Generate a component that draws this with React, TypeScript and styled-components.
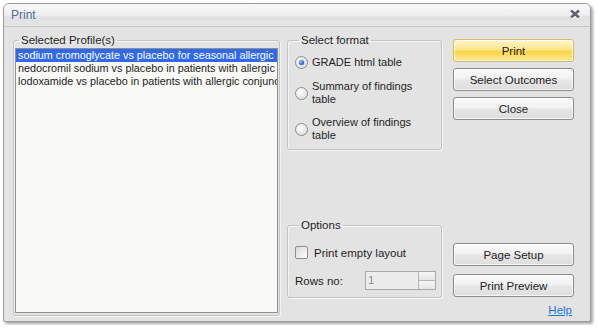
import React, { useState } from 'react';
import styled, { createGlobalStyle, css } from 'styled-components';

const GlobalStyle = createGlobalStyle`
	html, body {
		margin: 0;
		background: #ffffff;
	}
	#root {
		padding: 3px;
	}
`;

const uiFont = `'Liberation Sans', Arial, sans-serif`;

const Window = styled.div`
	width: 588px;
	height: 319px;
	box-sizing: border-box;
	border: 1px solid #9a9c9f;
	border-radius: 6px 6px 2px 2px;
	background: #e3e3e3;
	box-shadow: 2px 2px 3px rgba(0, 0, 0, 0.35);
	display: flex;
	flex-direction: column;
	overflow: hidden;
	font-family: ${uiFont};
	font-size: 11px;
	color: #1e1e1e;
`;

const TitleBar = styled.div`
	height: 23px;
	flex: none;
	display: flex;
	align-items: center;
	justify-content: space-between;
	padding: 0 9px 2px 7px;
	box-sizing: border-box;
	background: linear-gradient(#f8f8f8, #eeeeee 50%, #e0e0e0 60%, #e6e6e6);
	border-bottom: 1px solid #c6c6c6;
`;

const Title = styled.span`
	font-size: 12px;
	color: #4e6f9f;
	margin-top: 2px;
`;

const CloseButton = styled.button`
	border: none;
	background: none;
	padding: 0;
	width: 12px;
	height: 10px;
	display: flex;
	cursor: pointer;
`;

const Body = styled.div`
	flex: 1;
	display: grid;
	grid-template-columns: 267px 155px 125px;
	column-gap: 7px;
	padding: 7px 0 5px 9px;
	min-height: 0;
`;

const Group = styled.fieldset<{ $fill?: boolean }>`
	margin: 0;
	min-width: 0;
	border: 1px solid #c4c4c4;
	border-radius: 3px;
	box-shadow: inset 1px 1px 0 #f4f4f4, 1px 1px 0 #f4f4f4;
	padding: 0 5px 7px 7px;
	${({ $fill }) =>
		$fill &&
		css`
			padding: 0 1px 2px;
			display: flex;
			flex-direction: column;
		`}
`;

const Legend = styled.legend`
	padding: 0 2px;
	margin-left: 4px;
	font-size: 11.5px;
	line-height: 13px;
	color: #1e1e1e;
`;

const ListBox = styled.div`
	flex: 1;
	margin-top: 1px;
	border: 1px solid #8d8f92;
	background: #f9f9f5;
	overflow: hidden;
`;

const ListItem = styled.div<{ $selected: boolean }>`
	height: 13px;
	line-height: 13px;
	padding-left: 2px;
	font-size: 10.8px;
	white-space: nowrap;
	overflow: hidden;
	cursor: default;
	color: ${({ $selected }) => ($selected ? '#ffffff' : '#1e1e1e')};
	background: ${({ $selected }) => ($selected ? '#3169ee' : 'transparent')};
`;

const MiddleColumn = styled.div`
	display: flex;
	flex-direction: column;
	justify-content: space-between;
	padding-bottom: 18px;
`;

const RadioRow = styled.label<{ $gap: number }>`
	display: flex;
	align-items: center;
	gap: 4px;
	margin-top: ${({ $gap }) => $gap}px;
	line-height: 13px;
	cursor: default;
`;

const RadioCircle = styled.span<{ $checked: boolean }>`
	flex: none;
	width: 11px;
	height: 11px;
	border-radius: 50%;
	border: 1px solid #8b8d90;
	background: radial-gradient(circle at 40% 35%, #ffffff, #e2e2e2 70%, #d4d4d4);
	display: flex;
	align-items: center;
	justify-content: center;
	&::after {
		content: '';
		width: 5px;
		height: 5px;
		border-radius: 50%;
		display: ${({ $checked }) => ($checked ? 'block' : 'none')};
		background: radial-gradient(circle at 40% 35%, #8fc3ff, #2a6ad0 60%, #173f8a);
		box-shadow: 0 0 1px #1c4fa0;
	}
`;

const CheckRow = styled.label`
	display: flex;
	align-items: center;
	gap: 6px;
	margin-top: 14px;
	font-size: 11.5px;
	cursor: default;
`;

const CheckBox = styled.span`
	width: 11px;
	height: 11px;
	border: 1px solid #8b8d90;
	border-radius: 2px;
	background: linear-gradient(135deg, #d8d8d8, #ffffff);
`;

const RowsLine = styled.div`
	display: flex;
	align-items: center;
	justify-content: space-between;
	margin-top: 12px;
	font-size: 11.5px;
`;

const Spinner = styled.div`
	width: 71px;
	height: 19px;
	box-sizing: border-box;
	border: 1px solid #a8a8a8;
	background: #ececec;
	display: flex;
`;

const SpinValue = styled.span`
	flex: 1;
	padding-left: 2px;
	line-height: 17px;
	font-size: 11.5px;
	color: #8e8e8e;
`;

const SpinButtons = styled.div`
	width: 16px;
	display: flex;
	flex-direction: column;
	gap: 1px;
	background: #b5b5b5;
	border-left: 1px solid #b5b5b5;
`;

const SpinHalf = styled.span`
	flex: 1;
	background: linear-gradient(#f6f6f6, #e6e6e6);
`;

const RightColumn = styled.div`
	display: flex;
	flex-direction: column;
	padding-top: 5px;
	margin-left: 4px;
`;

const ButtonStack = styled.div<{ $gap: number }>`
	display: flex;
	flex-direction: column;
	gap: ${({ $gap }) => $gap}px;
`;

const Spacer = styled.div`
	flex: 1;
`;

const Button = styled.button<{ $primary?: boolean }>`
	height: 23px;
	width: 100%;
	border-radius: 3px;
	font-family: ${uiFont};
	font-size: 11.5px;
	color: #1e1e1e;
	padding: 0;
	cursor: pointer;
	border: 1px solid ${({ $primary }) => ($primary ? '#d8bb5e' : '#8a8c90')};
	background: ${({ $primary }) =>
		$primary
			? 'linear-gradient(#fff6cf, #fde58b 45%, #fbd443 55%, #fde8a0)'
			: 'linear-gradient(#fbfbfb, #f1f1f1 45%, #e5e5e5 55%, #dedede)'};
	box-shadow: inset 0 0 0 1px rgba(255, 255, 255, 0.7);
`;

const HelpLink = styled.a`
	align-self: flex-end;
	margin: 7px 2px 0 0;
	font-size: 11.5px;
	color: #1a76e4;
	text-decoration: underline;
	cursor: pointer;
`;

const profiles = [
	'sodium cromoglycate vs placebo for seasonal allergic conjunctivitis',
	'nedocromil sodium vs placebo in patients with allergic conjunctivitis',
	'lodoxamide vs placebo in patients with allergic conjunctivitis',
];

const formats = [
	{ id: 'grade', lines: ['GRADE html table'], gap: 9 },
	{ id: 'sof', lines: ['Summary of findings', 'table'], gap: 11 },
	{ id: 'oof', lines: ['Overview of findings', 'table'], gap: 10 },
];

function App(): JSX.Element {
	const [selected, setSelected] = useState(0);
	const [format, setFormat] = useState('grade');

	return (
		<React.Fragment>
			<GlobalStyle />
			<Window>
				<TitleBar>
					<Title>Print</Title>
					<CloseButton aria-label="Close">
						<svg width="12" height="10" viewBox="0 0 12 10">
							<path
								d="M2 1.5 L10 8.5 M10 1.5 L2 8.5"
								stroke="#ffffff"
								strokeWidth="3"
								transform="translate(0 1)"
							/>
							<path d="M2 1.5 L10 8.5 M10 1.5 L2 8.5" stroke="#5f6570" strokeWidth="2.6" />
						</svg>
					</CloseButton>
				</TitleBar>
				<Body>
					<Group $fill>
						<Legend>Selected Profile(s)</Legend>
						<ListBox>
							{profiles.map((p, i) => (
								<ListItem key={p} $selected={i === selected} onClick={() => setSelected(i)}>
									{p}
								</ListItem>
							))}
						</ListBox>
					</Group>
					<MiddleColumn>
						<Group>
							<Legend>Select format</Legend>
							{formats.map((f) => (
								<RadioRow key={f.id} $gap={f.gap} onClick={() => setFormat(f.id)}>
									<RadioCircle $checked={format === f.id} />
									<span>
										{f.lines.map((l) => (
											<div key={l}>{l}</div>
										))}
									</span>
								</RadioRow>
							))}
						</Group>
						<Group>
							<Legend>Options</Legend>
							<CheckRow>
								<CheckBox />
								Print empty layout
							</CheckRow>
							<RowsLine>
								<span>Rows no:</span>
								<Spinner>
									<SpinValue>1</SpinValue>
									<SpinButtons>
										<SpinHalf />
										<SpinHalf />
									</SpinButtons>
								</Spinner>
							</RowsLine>
						</Group>
					</MiddleColumn>
					<RightColumn>
						<ButtonStack $gap={6}>
							<Button $primary>Print</Button>
							<Button>Select Outcomes</Button>
							<Button>Close</Button>
						</ButtonStack>
						<Spacer />
						<ButtonStack $gap={8}>
							<Button>Page Setup</Button>
							<Button>Print Preview</Button>
						</ButtonStack>
						<HelpLink>Help</HelpLink>
					</RightColumn>
				</Body>
			</Window>
		</React.Fragment>
	);
}

export default App;
